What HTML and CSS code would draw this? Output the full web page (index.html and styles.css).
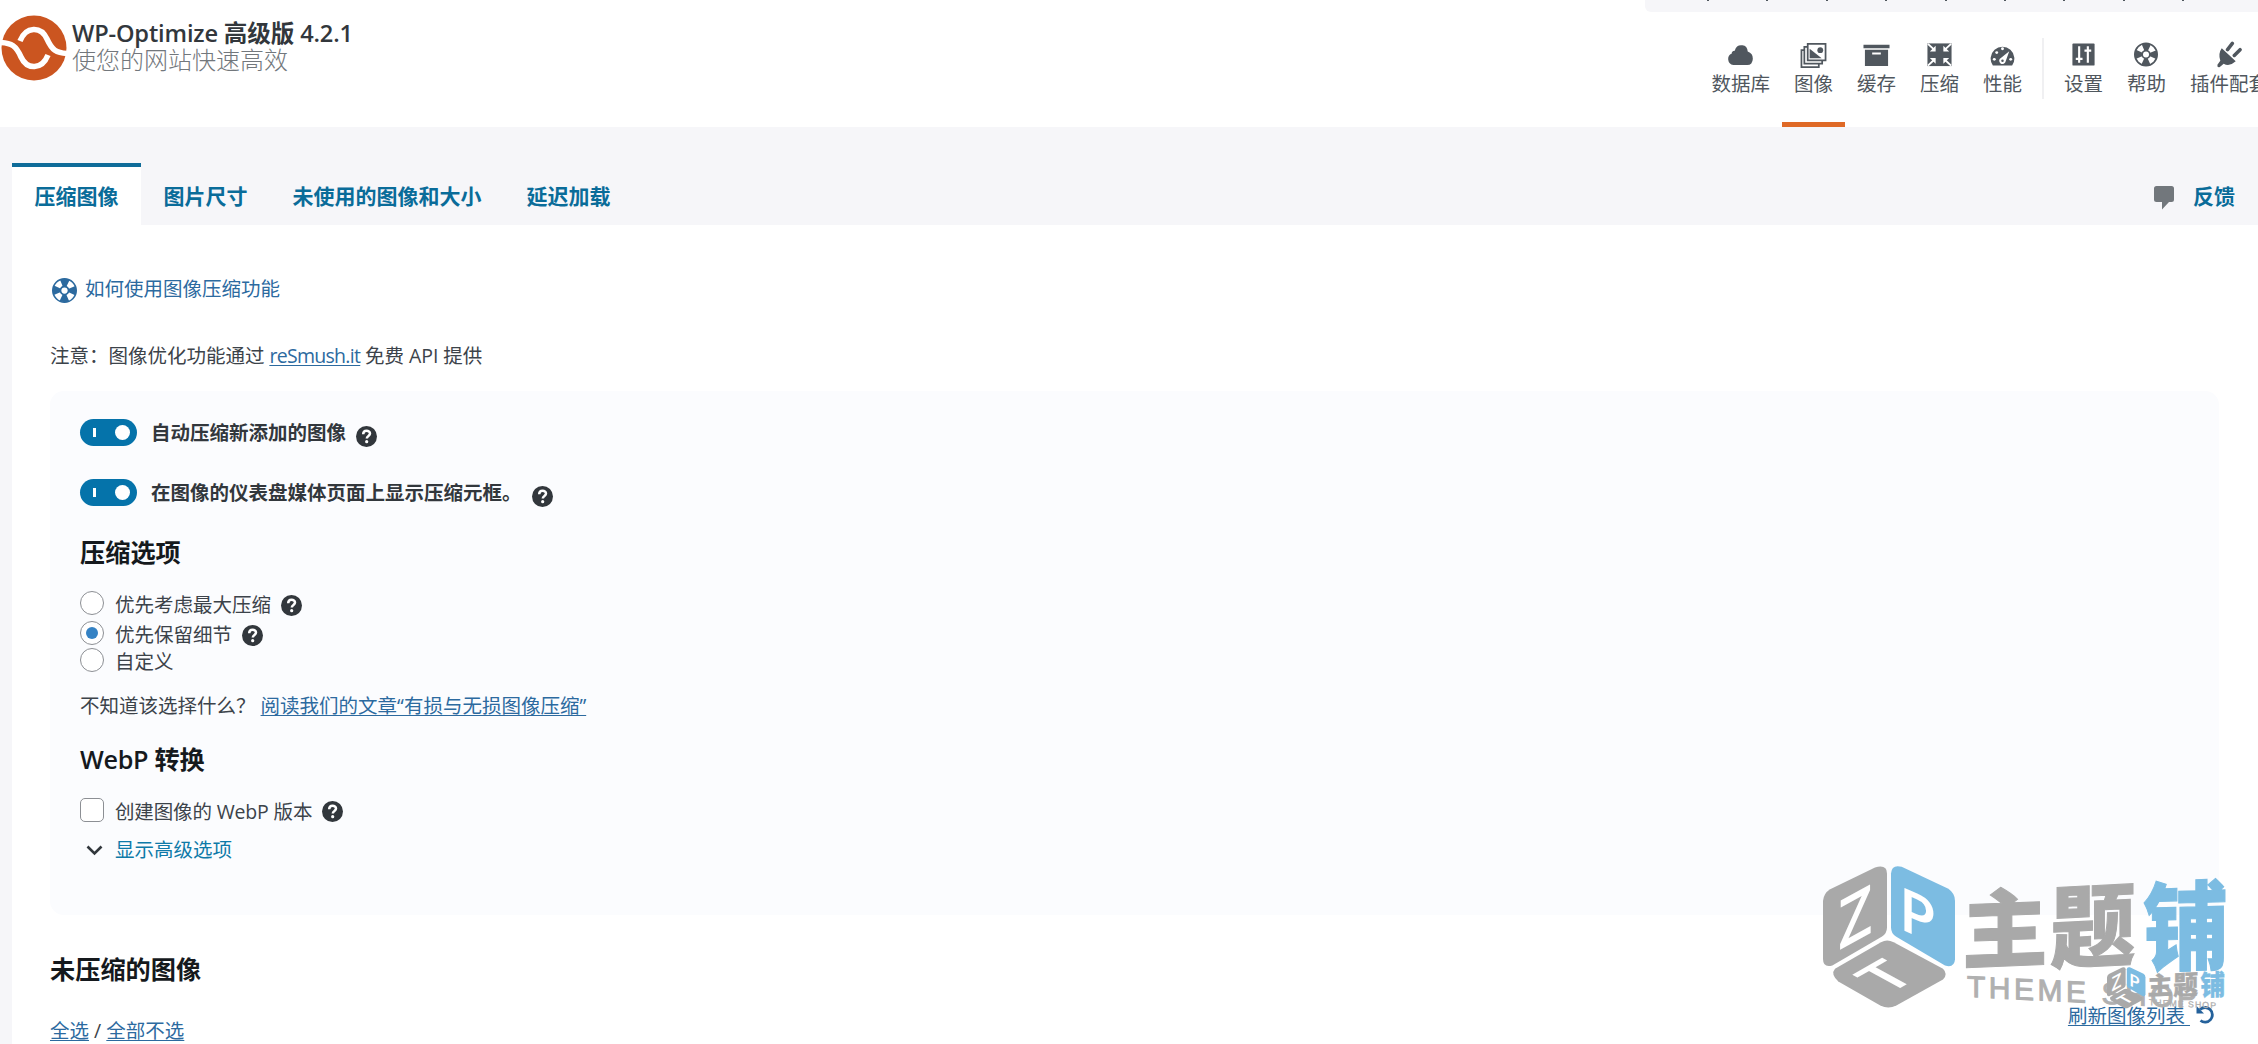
FILE: index.html
```html
<!DOCTYPE html>
<html lang="zh-CN">
<head>
  <meta charset="UTF-8" />
  <meta name="viewport" content="width=device-width, initial-scale=1.0"/>
  <title>WP-Optimize 高级版</title>
  <link rel="stylesheet" href="styles.css">
</head>
<body>

  <svg class="sprite" width="0" height="0">
    <symbol id="i-help" viewBox="0 0 21 21">
      <circle cx="10.5" cy="10.5" r="10.5" fill="#32373c"/>
      <path d="M7.2 8.2c0-4.6 6.8-4.3 6.8-.6 0 2.4-3.2 2.3-3.2 4.9" fill="none" stroke="#fff" stroke-width="2.5"/>
      <circle cx="10.7" cy="15.7" r="1.6" fill="#fff"/>
    </symbol>
    <symbol id="i-ring" viewBox="0 0 24 24">
      <circle cx="12" cy="12" r="11.2" fill="none" stroke="currentColor" stroke-width="1.6"/>
      <circle cx="12" cy="12" r="7.2" fill="none" stroke="currentColor" stroke-width="8" stroke-dasharray="6.1 5.21" stroke-dashoffset="3.05"/>
      <circle cx="12" cy="12" r="4.700"/>
      <circle cx="12" cy="12" r="3" fill="#fff"/>
    </symbol>
    <symbol id="logo" viewBox="130 78 1215 440">
      <g fill="#a9a9a9">
        <path d="M130 182Q132 160 150 148L286 82Q322 72 322 100V262Q322 280 306 290L158 376Q130 384 130 356Z"/>
        <path d="M166 386L304 306Q322 296 342 306L490 386Q506 402 490 418L350 496Q326 508 302 496L176 424Q152 402 166 386Z"/>
      </g>
      <path d="M334 100Q336 72 366 80L506 146Q526 160 526 182V358Q524 384 496 376L350 290Q334 280 334 262Z" fill="#7cbce2"/>
      <g class="logo-face">
        <text transform="matrix(.87 -.48 0 1 176 332)" font-size="205">Z</text>
        <text transform="matrix(1.02 .45 0 1 357 264)" font-size="180">P</text>
        <text transform="matrix(1.15 -.66 1.05 .58 324 465)" font-size="145">T</text>
      </g>
      <g class="logo-name">
        <text transform="matrix(1 -.04 0 1 548 366)" font-size="256" fill="#a9a9a9" stroke="#a9a9a9">主</text>
        <text transform="matrix(1 -.05 0 1.06 812 365)" font-size="256" fill="#a9a9a9" stroke="#a9a9a9">题</text>
        <text transform="matrix(1 -.03 0 1.13 1090 371)" font-size="256" fill="#7cbce2" stroke="#7cbce2">铺</text>
      </g>
      <text class="logo-sub" transform="matrix(1 .05 0 1 562 470)" textLength="690">THEME SHOP</text>
    </symbol>
  </svg>

  <header class="app-header">
    <svg class="brand-icon" viewBox="0 0 66 66">
      <circle cx="33" cy="33" r="32.5" fill="#cb5520"/>
      <path d="M19 26C25 11 40 11 46 24C51 35 55 38 67 38.500" fill="none" stroke="#fff" stroke-width="5.5"/>
      <path d="M47 40C41 55 26 55 20 42C15 31 11 28 -1 27.500" fill="none" stroke="#fff" stroke-width="5.5"/>
    </svg>
    <div class="brand">
      <div class="brand-name">WP-Optimize 高级版 4.2.1</div>
      <div class="brand-tagline">使您的网站快速高效</div>
    </div>

    <nav class="nav">
      <a class="nav-item">
        <svg viewBox="0 0 28 28"><path d="M6.500 25A6.300 6.300 0 0 1 5 13Q4.500 10.500 8 10Q10 3.500 16 4.500Q21 5 21.500 11Q27 13 26.800 18.500Q26.500 25 21 25Z"/></svg>
        <span>数据库</span>
      </a>
      <a class="nav-item active">
        <svg viewBox="0 0 28 28"><g fill="none" stroke="currentColor" stroke-width="1.8"><path d="M8 3h18.500v17H8z"/><path d="M7.500 6H4.500v17.500H23V20"/><path d="M4.500 9.500H1.500V27H19.500V23.500"/></g><path d="M10 8l12.500 10H10z"/><circle cx="21" cy="9.500" r="3"/></svg>
        <span>图像</span>
      </a>
      <a class="nav-item">
        <svg viewBox="0 0 28 28"><path d="M.5 4h27v3.500H.5zM2 9h24v17H2zM9.500 12v2h9v-2z" fill-rule="evenodd"/></svg>
        <span>缓存</span>
      </a>
      <a class="nav-item">
        <svg viewBox="0 0 28 28"><path d="M1.500 2.500h25v23.500h-25z"/><path d="M2 3l7 6.500M26 3l-7 6.500M2 25.500l7-6.500M26 25.500l-7-6.500" stroke="#fff" stroke-width="2"/><path d="M10 5v6H4zM18 5v6h6zM10 23.500v-6H4zM18 23.500v-6h6z" fill="#fff"/></svg>
        <span>压缩</span>
      </a>
      <a class="nav-item">
        <svg viewBox="0 0 28 28"><path d="M4 25.500A12.300 12.300 0 1 1 24 25.500Z"/><g fill="#fff"><circle cx="5.500" cy="19" r="1.500"/><circle cx="8" cy="12" r="1.500"/><circle cx="14" cy="8" r="1.500"/><circle cx="22.500" cy="19" r="1.500"/><path d="M21 10.500L17.300 21A3.400 3.400 0 1 1 12.300 17.500Z"/></g><circle cx="14" cy="20.500" r="1.300"/></svg>
        <span>性能</span>
      </a>
      <i class="nav-divider"></i>
      <a class="nav-item">
        <svg viewBox="0 0 28 28"><rect x="2.500" y="2.500" width="23" height="23" rx="1"/><path d="M9.500 5.500v17M18.500 5.500v17M6 18.500h7M15 10h7" stroke="#fff" stroke-width="2.200"/></svg>
        <span>设置</span>
      </a>
      <a class="nav-item">
        <svg class="ring"><use href="#i-ring"/></svg>
        <span>帮助</span>
      </a>
      <a class="nav-item">
        <svg viewBox="0 0 28 28"><path d="M7 7.500L21.500 21Q15 27 9 23.500L5 27Q2 28 2.500 24.500L5.500 20.500Q3 13 7 7.500Z"/><path d="M13 9l5-6.500M20 15l6-6" stroke="currentColor" stroke-width="3.600" stroke-linecap="round"/></svg>
        <span>插件配套</span>
      </a>
    </nav>

    <div class="screen-meta">
      <i></i><i></i><i></i><i></i><i></i><i></i><i></i><i></i><i></i>
    </div>
  </header>

  <div class="tabs">
    <a class="tab active">压缩图像</a>
    <a class="tab">图片尺寸</a>
    <a class="tab">未使用的图像和大小</a>
    <a class="tab">延迟加载</a>
    <a class="feedback">
      <svg width="20" height="24" viewBox="0 0 20 24"><path d="M2.500 0h15Q20 0 20 2.500v11q0 2.500-2.500 2.500H15l-7 7.500V16H2.500Q0 16 0 13.500v-11Q0 0 2.500 0z" fill="#72777c"/></svg>
      反馈
    </a>
  </div>

  <main class="content">
    <a class="how-to">
      <svg width="25" height="25"><use href="#i-ring"/></svg>
      如何使用图像压缩功能
    </a>

    <p class="note">注意：图像优化功能通过 <a class="link">reSmush.it</a> 免费 API 提供</p>

    <section class="panel">
      <div class="toggle-row">
        <span class="switch"></span>
        <b>自动压缩新添加的图像</b>
        <svg class="help"><use href="#i-help"/></svg>
      </div>
      <div class="toggle-row">
        <span class="switch"></span>
        <b>在图像的仪表盘媒体页面上显示压缩元框。</b>
        <svg class="help"><use href="#i-help"/></svg>
      </div>

      <h3 class="options-title">压缩选项</h3>
      <label class="option">
        <span class="radio"></span>
        优先考虑最大压缩
        <svg class="help"><use href="#i-help"/></svg>
      </label>
      <label class="option">
        <span class="radio checked"></span>
        优先保留细节
        <svg class="help"><use href="#i-help"/></svg>
      </label>
      <label class="option last">
        <span class="radio"></span>
        自定义
      </label>
      <p class="hint">不知道该选择什么？ <a class="link">阅读我们的文章“有损与无损图像压缩”</a></p>

      <h3 class="webp-title">WebP 转换</h3>
      <label class="option webp">
        <span class="checkbox"></span>
        <span class="webp-label">创建图像的 WebP 版本</span>
        <svg class="help"><use href="#i-help"/></svg>
      </label>
      <a class="advanced">
        <svg width="17" height="11" viewBox="0 0 17 11"><path d="M1.500 1.500l7 7 7-7" fill="none" stroke="#32373c" stroke-width="2.600"/></svg>
        显示高级选项
      </a>
    </section>

    <h3 class="list-title">未压缩的图像</h3>
    <div class="list-actions">
      <div class="select-links"><a class="link">全选</a> / <a class="link">全部不选</a></div>
      <div class="refresh">
        <a class="link">刷新图像列表&nbsp;</a>
        <svg width="19" height="19" viewBox="0 0 19 19"><path d="M4 4.500A7.300 7.300 0 1 1 4.500 15.500" fill="none" stroke="currentColor" stroke-width="2.800"/><path d="M.5 1v7.500H8z"/></svg>
      </div>
    </div>
  </main>

  <div class="watermark">
    <svg class="mark-large"><use href="#logo"/></svg>
    <svg class="mark-small"><use href="#logo"/></svg>
  </div>

</body>
</html>
```
FILE: styles.css
```css
* {
  box-sizing: border-box;
}
body {
  font-family: "Open Sans", "Noto Sans CJK SC", sans-serif;
  font-size: 19.5px;
  line-height: 30px;
  color: #3c434a;
  background: #f6f6f9;
  margin: 0;
  height: 1044px;
  overflow: hidden;
}
h3, p {
  margin: 0;
}
h3 {
  color: #15191d;
  font-size: 25.2px;
  font-weight: 600;
  line-height: 36px;
}
svg {
  flex: none;
  fill: currentColor;
}
.sprite {
  position: absolute;
}
.link {
  color: #2c6a9f;
  text-decoration: underline;
  text-underline-offset: 2px;
  text-decoration-thickness: 1px;
}

/* header */
.app-header {
  position: relative;
  display: flex;
  height: 127px;
  background: #fff;
  overflow: hidden;
}
.brand-icon {
  width: 66px;
  height: 66px;
  margin: 15px 5px 0 1px;
}
.brand {
  padding-top: 19px;
  white-space: nowrap;
}
.brand-name {
  color: #32373c;
  font-size: 23.6px;
  font-weight: 600;
  line-height: 28px;
  letter-spacing: -0.15px;
}
.brand-tagline {
  color: #72777c;
  font-size: 24px;
  font-weight: 300;
  line-height: 26px;
}
.nav {
  display: flex;
  margin-left: auto;
  margin-right: -22px;
}
.nav-item {
  display: flex;
  flex-direction: column;
  align-items: center;
  gap: 1px;
  padding: 41px 12px 0;
  color: #50575e;
  white-space: nowrap;
  border-bottom: 5px solid transparent;
}
.nav-item svg {
  width: 27px;
  height: 27px;
}
.nav-item .ring {
  width: 24px;
}
.nav-item.active {
  border-color: #df6926;
}
.nav-divider {
  width: 2px;
  height: 61px;
  margin: 38px 8px 0;
  background: #f0f0f2;
}
.screen-meta {
  position: absolute;
  top: 0;
  right: 0;
  display: flex;
  justify-content: space-between;
  width: 613px;
  height: 12px;
  padding: 0 74px 0 62px;
  background: #f6f6f9;
  border-bottom-left-radius: 6px;
}
.screen-meta i {
  width: 2px;
  height: 1px;
  background: #50575e;
}

/* tabs */
.tabs {
  display: flex;
  height: 98px;
  padding: 36px 23px 0 12px;
  color: #0a6c99;
  font-size: 21px;
  font-weight: 600;
}
.tab {
  padding: 14px 22.500px 0;
  border-top: 4px solid transparent;
}
.tab.active {
  background: #fff;
  border-top-color: #0f6c99;
}
.feedback {
  display: flex;
  gap: 19px;
  margin-left: auto;
  padding-top: 18px;
}
.feedback svg {
  margin-top: 5px;
}

/* page content */
.content {
  height: 819px;
  margin-left: 12px;
  padding: 49px 39px 0 38px;
  background: #fff;
}
.how-to {
  display: flex;
  gap: 8px;
  color: #2c6a9f;
}
.how-to svg {
  margin: 4px 0 0 2px;
}
.note {
  margin-top: 37px;
  word-spacing: -0.2px;
}
.note .link {
  letter-spacing: -0.7px;
}
.panel {
  height: 524px;
  margin-top: 20px;
  padding: 28px 30px 0;
  background: #fbfcfe;
  border-radius: 14px;
}
.help {
  width: 21px;
  height: 21px;
}
.toggle-row {
  display: flex;
  align-items: center;
  height: 27px;
  margin-bottom: 33px;
  color: #32373c;
}
.toggle-row b {
  margin: 0 10px 0 14px;
  font-weight: 600;
}
.toggle-row .help {
  margin-top: 8px;
}
.switch {
  display: flex;
  align-items: center;
  justify-content: space-between;
  width: 57px;
  height: 27px;
  padding: 0 7px 0 13px;
  background: #0573aa;
  border-radius: 14px;
}
.switch::before {
  content: "";
  width: 3px;
  height: 9px;
  background: #fff;
}
.switch::after {
  content: "";
  width: 15px;
  height: 15px;
  background: #fff;
  border-radius: 50%;
}
.options-title {
  margin: -5px 0 20px;
}
.option {
  display: flex;
  align-items: center;
  gap: 10px;
  height: 30px;
}
.option.last {
  height: 23px;
}
.radio, .checkbox {
  display: flex;
  align-items: center;
  justify-content: center;
  width: 24px;
  height: 24px;
  margin: -4px 1px 0 0;
  background: #fff;
  border: 1px solid #8c8f94;
  border-radius: 50%;
}
.radio.checked::before {
  content: "";
  width: 12px;
  height: 12px;
  background: #3582c4;
  border-radius: 50%;
}
.checkbox {
  margin-top: -2px;
  border-radius: 5px;
}
.hint {
  margin: 18px 0 20px;
}
.option.webp {
  margin-top: 19px;
}
.webp-title {
  letter-spacing: -0.3px;
}
.webp-label {
  padding-top: 2px;
  letter-spacing: -0.15px;
}
.advanced {
  display: flex;
  align-items: center;
  gap: 12px;
  margin-top: 9px;
  padding-left: 6px;
  color: #0e7aa8;
}

/* image list */
.list-title {
  margin-top: 36px;
}
.list-actions {
  display: flex;
  justify-content: space-between;
  margin-top: 14px;
}
.select-links {
  padding-top: 15px;
}
.refresh {
  display: flex;
  gap: 6px;
  padding-right: 4px;
  color: #24619b;
}
.refresh svg {
  margin-top: 4px;
}

/* logo stamp over the page */
.watermark {
  position: absolute;
  left: 1823px;
  top: 866px;
  width: 405px;
  height: 147px;
  pointer-events: none;
}
.mark-large {
  position: absolute;
  width: 405px;
  height: 147px;
}
.mark-small {
  position: absolute;
  left: 284px;
  top: 101px;
  width: 118px;
  height: 43px;
}
.logo-face {
  fill: #fff;
  font-family: "Open Sans", sans-serif;
  font-weight: 600;
}
.logo-name {
  font-family: "Noto Sans CJK SC", sans-serif;
  font-weight: 900;
  stroke-width: 3;
}
.logo-sub {
  fill: #b0b0b0;
  stroke: #b0b0b0;
  stroke-width: 3;
  font-family: "Liberation Sans", sans-serif;
  font-size: 90px;
}
```
